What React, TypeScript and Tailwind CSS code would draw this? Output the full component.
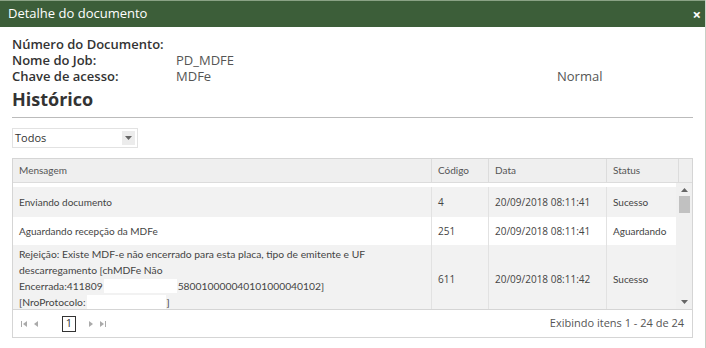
const font = { fontFamily: '"Open Sans", "Noto Sans", Arial, sans-serif' }
const tableFont = { fontFamily: 'Lato, "Open Sans", Arial, sans-serif' }

function Caret({ dir }: { dir: 'up' | 'down' }) {
  return (
    <svg width="7" height="4" viewBox="0 0 7 4" className="text-[#666]">
      {dir === 'up' ? <path d="M0 4 L3.5 0 L7 4 Z" fill="currentColor" /> : <path d="M0 0 L3.5 4 L7 0 Z" fill="currentColor" />}
    </svg>
  )
}

function PagerIcon({ kind }: { kind: 'first' | 'prev' | 'next' | 'last' }) {
  return (
    <svg width="8" height="8" viewBox="0 0 8 8" className="text-[#aaa]">
      {kind === 'first' && <><rect x="1" y="1" width="1" height="6" fill="currentColor" /><path d="M7 1 L3 4 L7 7 Z" fill="currentColor" /></>}
      {kind === 'prev' && <path d="M6 1 L2 4 L6 7 Z" fill="currentColor" />}
      {kind === 'next' && <path d="M2 1 L6 4 L2 7 Z" fill="currentColor" />}
      {kind === 'last' && <><path d="M1 1 L5 4 L1 7 Z" fill="currentColor" /><rect x="6" y="1" width="1" height="6" fill="currentColor" /></>}
    </svg>
  )
}

const cols = 'grid grid-cols-[418px_57px_118px_72px]'
const cell = 'px-[6px] flex items-center border-l border-[#e2e2e2]'
const head = 'px-[6px] flex items-center border-l border-[#dcdcdc] text-[#555]'

export default function App() {
  return (
    <div className="w-[706px] h-[348px] bg-white overflow-hidden border-r border-[#c9cfc6]" style={font}>
      <div className="h-[27px] bg-[#3c5e39] border-t border-[#8aa285] flex items-center justify-between pl-2 pr-[4px] text-white">
        <span className="text-[13px]">Detalhe do documento</span>
        <span className="text-[15px] font-bold leading-none">×</span>
      </div>

      <div className="px-3 pt-[9px]">
        <div className="text-[13px] leading-[16px] text-[#333]">
          <div className="font-semibold">Número do Documento:</div>
          <div className="flex"><span className="font-semibold w-[164px]">Nome do Job:</span><span className="text-[#555]">PD_MDFE</span></div>
          <div className="flex"><span className="font-semibold w-[164px]">Chave de acesso:</span><span className="text-[#555] w-[381px]">MDFe</span><span className="text-[#555]">Normal</span></div>
        </div>
        <div className="text-[18px] font-bold text-[#333] leading-[24px] mt-[3px]">Histórico</div>
        <div className="h-px bg-[#bbb] mt-[6px] w-[681px]" />

        <div className="mt-[10px] w-[126px] h-[20px] border border-[#e2e2e2] flex items-center justify-between pl-[2px] pr-[2px] text-[11px] text-[#333]">
          <span>Todos</span>
          <span className="w-[13px] h-[14px] bg-[#ececec] flex items-center justify-center"><Caret dir="down" /></span>
        </div>

        <div className="mt-[10px] w-[681px] border border-[#d5d5d5] text-[10px] text-[#444]" style={tableFont}>
          <div className="flex bg-[#efefef] h-[24px] border-b border-[#dcdcdc]">
            <div className={cols + ' flex-1'}>
              <div className="px-[6px] flex items-center text-[#555]">Mensagem</div>
              <div className={head}>Código</div>
              <div className={head}>Data</div>
              <div className={head}>Status</div>
            </div>
            <div className="w-[16px] border-l border-[#dcdcdc]" />
          </div>

          <div className="flex h-[126px]">
            <div className="flex-1 pt-[4px] overflow-hidden">
              <div className={cols + ' bg-[#f2f2f2] h-[30px]'}>
                <div className="px-[6px] flex items-center">Enviando documento</div>
                <div className={cell} style={font}>4</div>
                <div className={cell} style={font}>20/09/2018 08:11:41</div>
                <div className={cell}>Sucesso</div>
              </div>
              <div className={cols + ' bg-white h-[28px]'}>
                <div className="px-[6px] flex items-center">Aguardando recepção da MDFe</div>
                <div className={cell} style={font}>251</div>
                <div className={cell} style={font}>20/09/2018 08:11:41</div>
                <div className={cell}>Aguardando</div>
              </div>
              <div className={cols + ' bg-[#f2f2f2] h-[68px]'}>
                <div className="px-[6px] pt-[1px] leading-[16px] text-[10.3px]">
                  <div>Rejeição: Existe MDF-e não encerrado para esta placa, tipo de emitente e UF</div>
                  <div>descarregamento [chMDFe Não</div>
                  <div className="flex">Encerrada:411809<span className="inline-block w-[73px] h-[14px] bg-white mx-[1px] mt-[1px]" />580010000040101000040102]</div>
                  <div className="flex">[NroProtocolo:<span className="inline-block w-[79px] h-[14px] bg-white mx-[1px] mt-[1px]" />]</div>
                </div>
                <div className={cell} style={font}>611</div>
                <div className={cell} style={font}>20/09/2018 08:11:42</div>
                <div className={cell}>Sucesso</div>
              </div>
            </div>
            <div className="w-[16px] bg-[#f0f0f0] flex flex-col items-center pt-[5px] pb-[5px]">
              <Caret dir="up" />
              <div className="w-[11px] h-[17px] bg-[#c1c1c1] mt-[4px]" />
              <div className="flex-1" />
              <Caret dir="down" />
            </div>
          </div>

          <div className="h-[28px] border-t border-[#d5d5d5] flex items-center justify-between pl-[5px] pr-[8px]" style={font}>
            <div className="flex items-center">
              <span className="w-[11px] flex justify-center"><PagerIcon kind="first" /></span>
              <span className="w-[11px] flex justify-center ml-[1px]"><PagerIcon kind="prev" /></span>
              <span className="ml-[21px] w-[14px] h-[16px] border border-[#333] flex items-center justify-center text-[11px] text-[#333]">1</span>
              <span className="w-[11px] flex justify-center ml-[9px]"><PagerIcon kind="next" /></span>
              <span className="w-[11px] flex justify-center ml-[1px]"><PagerIcon kind="last" /></span>
            </div>
            <span className="text-[11px] text-[#555]">Exibindo itens 1 - 24 de 24</span>
          </div>
        </div>
      </div>
    </div>
  )
}
